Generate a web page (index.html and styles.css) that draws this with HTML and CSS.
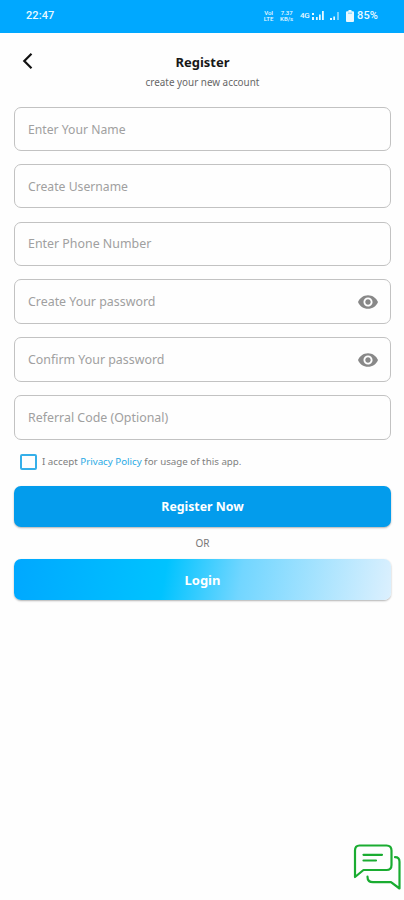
FILE: index.html
```html
<!DOCTYPE html>
<html lang="en">
<head>
<meta charset="utf-8">
<title>Register</title>
<link rel="stylesheet" href="styles.css">
</head>
<body>
<header class="status">
  <span class="time">22:47</span>
  <div class="indicators">
    <span class="tiny volte"><span>VoI</span><span>LTE</span></span>
    <span class="tiny rate"><span>7.37</span><span>KB/s</span></span>
    <span class="net">4G</span>
    <svg class="signal" viewBox="0 0 13 10"><path d="M1 2h2v2H1zM1 6h2v3H1zM5 6h1.700v3H5zM8 3.500h1.700V9H8zM11 0h1.800v9H11z"/></svg>
    <svg class="signal-low" viewBox="0 0 9 10"><path d="M0 7h2v2H0zM3.300 5.500H5V9H3.300zM7.500 1H8.500v8h-1z"/></svg>
    <svg class="battery" viewBox="0 0 8 12"><path d="M2.500 0h3v1.300H7q1 0 1 1V11q0 1-1 1H1q-1 0-1-1V2.300q0-1 1-1h1.500z"/><path class="drain" d="M2 2.700h4v.9H2z"/></svg>
    <span class="percent">85%</span>
  </div>
</header>
<main>
  <div class="heading">
    <svg class="back" viewBox="0 0 12 18"><path d="M9.500 1.800 2.300 9l7.200 7.200"/></svg>
    <div class="titles">
      <h1>Register</h1>
      <p>create your new account</p>
    </div>
  </div>
  <form>
    <div class="field snug"><span>Enter Your Name</span></div>
    <div class="field snug"><span>Create Username</span></div>
    <div class="field"><span>Enter Phone Number</span></div>
    <div class="field tall"><span>Create Your password</span>
      <svg class="eye" viewBox="1 4.500 22 15"><path d="M12 4.500C7 4.500 2.730 7.610 1 12c1.730 4.390 6 7.500 11 7.500s9.270-3.110 11-7.500c-1.730-4.390-6-7.500-11-7.500zM12 17c-2.760 0-5-2.240-5-5s2.240-5 5-5 5 2.240 5 5-2.240 5-5 5zm0-8c-1.660 0-3 1.340-3 3s1.340 3 3 3 3-1.340 3-3-1.340-3-3-3z"/></svg></div>
    <div class="field tall"><span>Confirm Your password</span>
      <svg class="eye" viewBox="1 4.500 22 15"><path d="M12 4.500C7 4.500 2.730 7.610 1 12c1.730 4.390 6 7.500 11 7.500s9.270-3.110 11-7.500c-1.730-4.390-6-7.500-11-7.500zM12 17c-2.760 0-5-2.240-5-5s2.240-5 5-5 5 2.240 5 5-2.240 5-5 5zm0-8c-1.660 0-3 1.340-3 3s1.340 3 3 3 3-1.340 3-3-1.340-3-3-3z"/></svg></div>
    <div class="field tall"><span>Referral Code (Optional)</span></div>
    <div class="terms"><span class="box"></span><span class="label">I accept <a>Privacy Policy</a> for usage of this app.</span></div>
    <div class="button primary">Register Now</div>
    <div class="or">OR</div>
    <div class="button login">Login</div>
  </form>
</main>
<svg class="chat" viewBox="0 0 48 48"><path d="M6.500 2.500h27q5 0 5 5V22q0 5-5 5H10.500L2 34V7.500q0-5 4.500-5zM10.500 11.800h18.500M10.500 17.500h12.500M42 14.200q4.500 0 4.500 4.500V45.500l-8.500-6.300H20q-5.500 0-5.500-5.500"/></svg>
</body>
</html>
```

FILE: styles.css
```css
* { box-sizing: border-box; }
body {
  margin: 0;
  width: 404px;
  height: 900px;
  position: relative;
  overflow: hidden;
  background: #fefefe;
  font-family: "Noto Sans", sans-serif;
}
.status {
  height: 33px;
  padding: 0 26px;
  display: flex;
  align-items: center;
  justify-content: space-between;
  background: #00a8ff;
  color: #e8f8ff;
  font: 500 11px/31px Roboto, sans-serif;
}
.time { letter-spacing: 0.1px; padding-bottom: 2px; }
.indicators { display: flex; align-items: center; height: 31px; margin-bottom: 2px; }
.indicators svg { display: block; fill: #e8f8ff; }
.tiny { display: flex; flex-direction: column; align-items: center; font-size: 6px; line-height: 6px; }
.volte { width: 13px; margin-right: 5px; }
.rate { width: 13px; margin-right: 7px; }
.net { font-size: 8px; width: 11px; letter-spacing: -0.5px; }
.signal { width: 13px; height: 10px; margin-right: 6px; }
.signal-low { width: 9px; height: 10px; margin-right: 7px; }
.battery { width: 8px; height: 12px; margin-right: 3px; }
.battery .drain { fill: #5fc9ff; }
.percent { letter-spacing: 0.1px; }
main { padding: 0 13px 0 14px; }
.heading { height: 74px; position: relative; padding-top: 20px; }
.back { position: absolute; left: 8px; top: 19px; width: 12px; height: 18px; fill: none; stroke: #111; stroke-width: 2.2; }
.titles { text-align: center; }
h1 { margin: 0; font-size: 13px; line-height: 18px; font-weight: 700; color: #181818; }
.titles p { margin: 3px 0 0; font-size: 9.9px; line-height: 16px; color: #666; }
.field {
  height: 44px;
  margin-bottom: 13.4px;
  padding: 0 12px 0 13px;
  border: 1px solid #c2c2c2;
  border-radius: 7px;
  display: flex;
  align-items: center;
  justify-content: space-between;
  color: #a0a0a0;
  font-size: 12.4px;
  white-space: nowrap;
}
.snug { font-size: 12.2px; }
.tall { height: 45px; margin-bottom: 13px; }
.eye { width: 20px; height: 14px; fill: #888; }
.terms { display: flex; align-items: center; height: 18px; margin: 0 0 15px 6px; padding-bottom: 1px; }
.box { width: 17px; height: 16px; border: 2px solid #35afe9; border-radius: 2px; margin-right: 5px; }
.label { font-size: 9.75px; color: #808080; white-space: nowrap; }
.label a { color: #28aae5; }
.button {
  height: 41px;
  border-radius: 7px;
  color: #fff;
  font-size: 13px;
  font-weight: 700;
  line-height: 41px;
  text-align: center;
  box-shadow: 0 1px 2px rgba(0, 0, 0, 0.3);
}
.primary { background: #039cec; font-size: 12.3px; }
.or { height: 32px; line-height: 33px; text-align: center; font-size: 10px; color: #777; }
.login { line-height: 43px; background: linear-gradient(100deg, #00a8ff 0%, #00c3ff 40%, #72d6ff 60%, #dcf0fe 100%); }
.chat {
  position: absolute;
  left: 353px;
  top: 843px;
  width: 48px;
  height: 48px;
  fill: none;
  stroke: #1aac31;
  stroke-width: 2.2;
  stroke-linecap: round;
  stroke-linejoin: round;
}
```
